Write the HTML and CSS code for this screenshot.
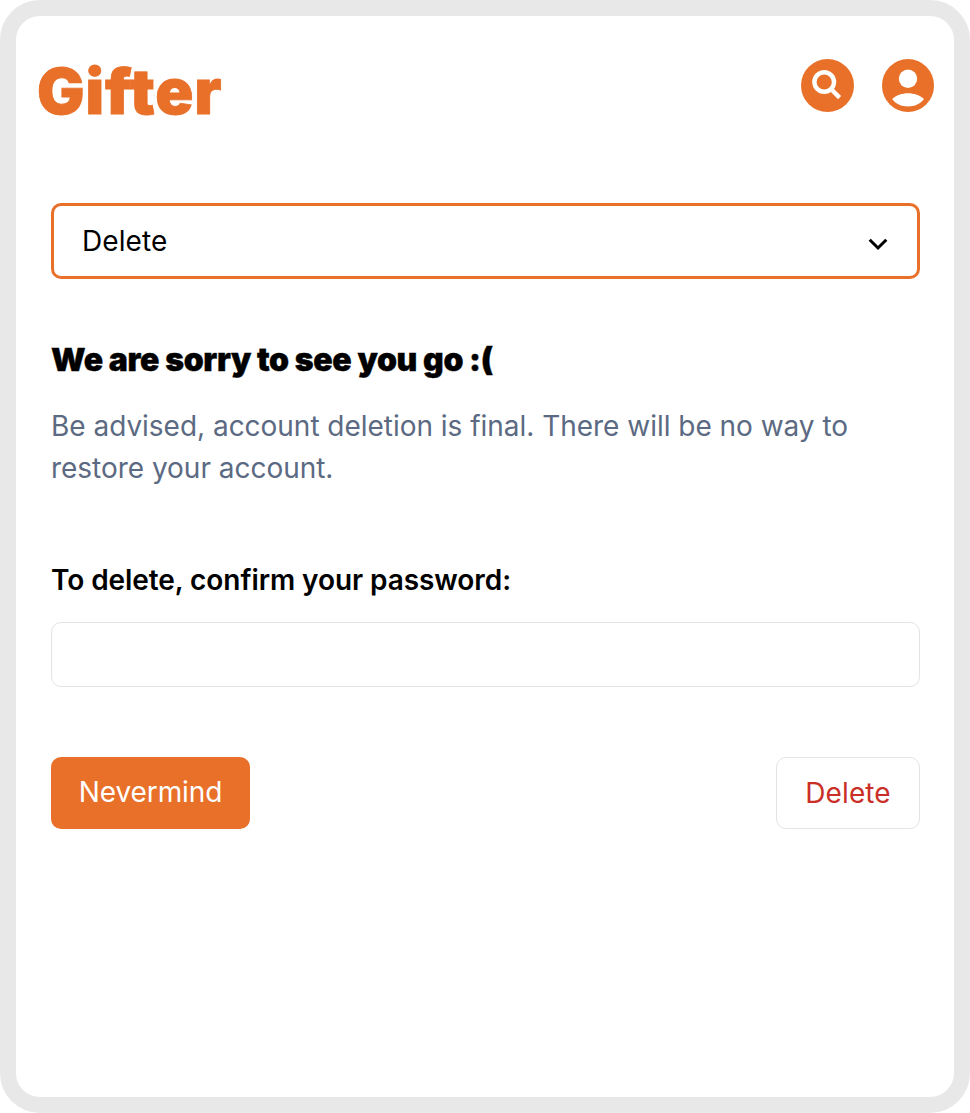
FILE: index.html
```html
<!DOCTYPE html>
<html lang="en">
<head>
<meta charset="utf-8">
<title>Gifter</title>
<link rel="stylesheet" href="styles.css">
</head>
<body>
<div class="frame">
  <header class="header">
    <h1 class="logo">Gifter</h1>
    <nav class="nav">
      <svg class="icon" viewBox="0 0 53 53" role="img" aria-label="Search"><circle class="disc" cx="26.5" cy="26.5" r="26.5"/><circle class="lens" cx="23.2" cy="23" r="9.8"/><path class="handle" d="M30 30 38.600 38.600"/></svg>
      <svg class="icon profile" viewBox="0 0 52 53" role="img" aria-label="Profile"><ellipse class="disc" cx="26" cy="26.5" rx="26" ry="26.5"/><circle class="person" cx="26" cy="19.7" r="9.2"/><path class="person" d="M10.200 40C14 36.300 20 34.200 26 34.200S38 36.300 42 40C38.500 44.800 32.500 47.500 26 47.500S13.500 44.800 10.200 40Z"/></svg>
    </nav>
  </header>
  <main class="main">
    <button class="select" type="button"><span class="text">Delete</span><svg class="chevron" viewBox="0 0 20 13"><path d="M1.700 1.700 10 10 18.300 1.700"/></svg></button>
    <h2 class="title">We are sorry to see you go :(</h2>
    <p class="advice">Be advised, account deletion is final. There will be no way to restore your account.</p>
    <label class="label" for="password">To delete, confirm your password:</label>
    <input class="password" id="password" type="password">
    <div class="actions">
      <button class="button primary" type="button"><span class="text">Nevermind</span></button>
      <button class="button danger" type="button"><span class="text">Delete</span></button>
    </div>
  </main>
</div>
</body>
</html>
```
FILE: styles.css
```css
* { box-sizing: border-box; }
body { margin: 0; background: #fff; font-family: Inter, sans-serif; color: #000; }
.frame { height: 1113px; border: 16px solid #e8e8e8; border-radius: 40px; background: #fff; }
.header { display: flex; justify-content: space-between; padding: 43px 20px 0 21px; height: 187px; }
.logo { margin: 0; color: #e87029; font-size: 63px; line-height: 64px; font-weight: 900; letter-spacing: 0.9px; -webkit-text-stroke: 0.8px #e87029; }
.nav { display: flex; gap: 28px; }
.icon { width: 53px; height: 53px; }
.icon.profile { width: 52px; }
.disc { fill: #e87029; }
.lens, .handle { fill: none; stroke: #fff; stroke-width: 4.4; }
.person { fill: #fff; }
.main { display: flex; flex-direction: column; padding: 0 34px 0 35px; }
.select { display: flex; align-items: center; justify-content: space-between; height: 76px; padding: 0 29px 0 28px; border: 3px solid #e87029; border-radius: 10px; background: #fff; font: 400 28px/36px Inter, sans-serif; letter-spacing: 0.1px; color: #000; }
.chevron { width: 20px; height: 13px; margin-top: 7px; fill: none; stroke: #000; stroke-width: 3; }
.title { margin: 60px 0 0; font-size: 32px; line-height: 42px; font-weight: 900; letter-spacing: -0.34px; -webkit-text-stroke: 0.4px #000; }
.advice { margin: 24px 0 0; color: #5b6a82; font-size: 28px; line-height: 42px; letter-spacing: -0.025px; }
.label { margin-top: 70px; font-size: 28px; line-height: 42px; font-weight: 600; letter-spacing: -0.07px; }
.password { height: 65px; margin: 21px 0 0; border: 1px solid #e3e4e8; border-radius: 10px; background: #fff; }
.actions { display: flex; justify-content: space-between; margin-top: 70px; }
.button { height: 72px; padding: 0; border: 0; border-radius: 10px; font: 400 28px/36px Inter, sans-serif; }
.primary { width: 199px; padding-bottom: 2px; background: #e87029; color: #fff; letter-spacing: -0.1px; }
.danger { width: 144px; border: 1px solid #e3e4e8; background: #fff; color: #c92f27; letter-spacing: 0.1px; }
```
